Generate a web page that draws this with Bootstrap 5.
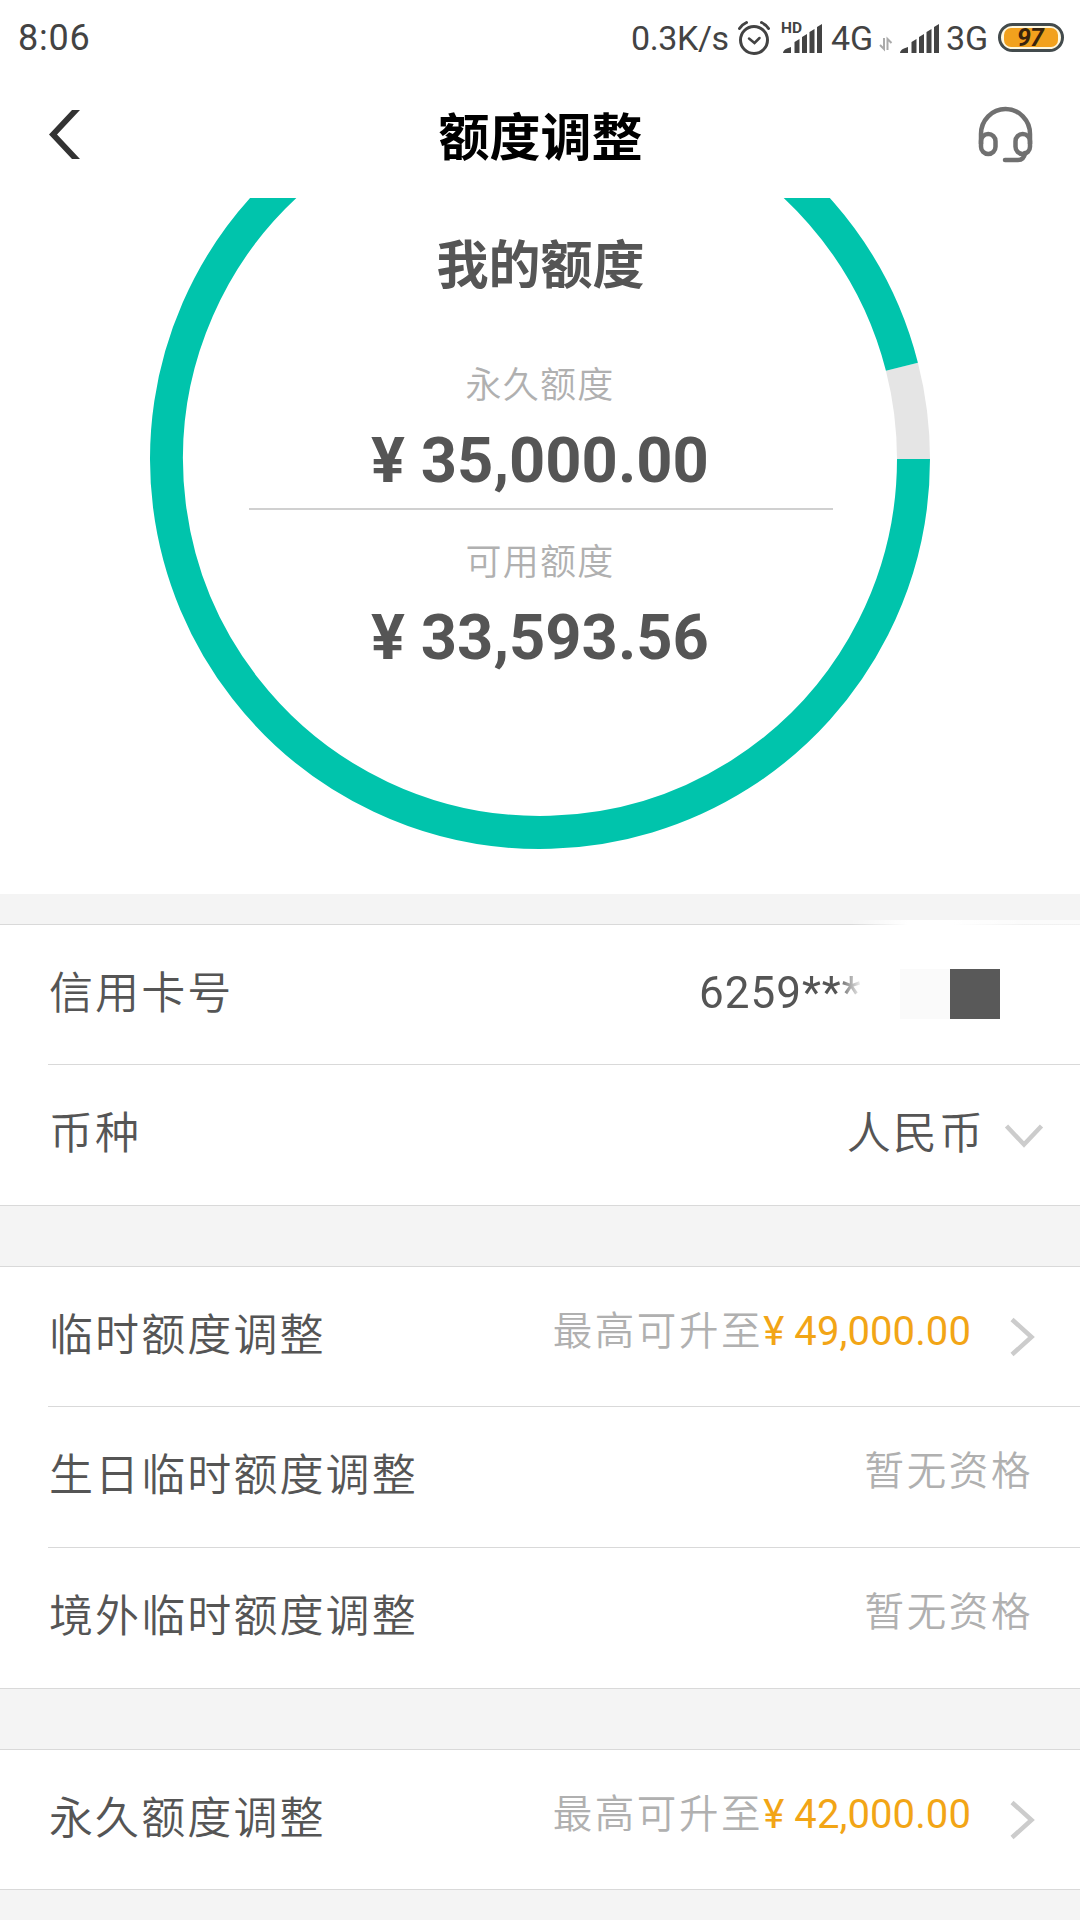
<!DOCTYPE html>
<html lang="zh-CN">
<head>
<meta charset="utf-8">
<meta name="viewport" content="width=device-width, initial-scale=1">
<title>额度调整</title>
<link href="https://cdn.jsdelivr.net/npm/bootstrap@5.3.0/dist/css/bootstrap.min.css" rel="stylesheet">
<style>
body{width:1080px;height:1920px;overflow:hidden;background:#f4f4f4;color:#555;font-family:Roboto,"Noto Sans CJK SC",sans-serif;line-height:1}
svg{display:block;flex:none;overflow:visible}
.status-bar{height:76px;padding:0 15px 0 18px;color:#434343;font-size:34px}
.status-bar .clock{font-size:36px;letter-spacing:.8px}
.status-bar span{white-space:nowrap}
.status-bar .speed{width:106px;letter-spacing:-.4px}
.status-bar .net-a{width:48px}
.status-bar .net-b{width:58px;padding-left:6px}
.arrows{margin-top:12px}
.bars-b{margin-left:7px}
.title-bar{height:122px;padding:0 48px}
.title-bar h1{font-size:51px;font-weight:700;color:#000;line-height:1;padding:2px 0 0 1px}
.ring-box{height:696px}
.ring-art{left:0;top:0}
.ring-info{padding-top:43px}
.ring-info h2{font-size:52px;font-weight:700;line-height:1;height:52px;margin-bottom:75px;padding-left:1px}
.ring-info .cap{font-size:36px;font-weight:350;letter-spacing:1.3px;color:#b0b0b0;height:36px}
.ring-info .sum{font-size:63.3px;font-weight:700;height:64px;margin-top:25px}
.ring-info .rule{width:584px;height:2px;background:#d0d0d0;margin:15px 0 35px 2px}
.line-item{height:141px;padding:0 46px 1px 49px;background:#fff}
.line-item + .line-item::before{content:"";position:absolute;left:48px;right:0;top:0;height:1px;background:#d9d9d9}
.block{border-top:1px solid #d9d9d9;border-bottom:1px solid #d9d9d9;border-radius:0}
.block .line-item:first-child{height:139px}
.gap-s{height:30px}.gap-l{height:60px}
.item-name{font-size:44px;letter-spacing:2.1px;font-weight:350}
.hint{font-size:39.5px;letter-spacing:2.6px;font-weight:350;color:#b0b0b0;padding-bottom:9px}
.line-item .hint:last-child{margin-right:1px}
.gold{font-size:40px;color:#f2a516;letter-spacing:.1px;padding-bottom:9px}
.card-no{font-size:44px;letter-spacing:1px;-webkit-mask-image:linear-gradient(90deg,#000 138px,transparent 164px);mask-image:linear-gradient(90deg,#000 138px,transparent 164px);width:201px;padding-bottom:3px}
.blk{width:50px;height:50px}
.blk-a{background:#fafafa}.blk-b{background:#595959;margin-right:34px}
.chev-down{margin:5px -9px 0 20px}
.chev-right{margin:1px -1px 0 39px}
.wash{left:850px;right:0;top:-5px;height:6px;z-index:3;background:linear-gradient(90deg,rgba(255,255,255,0),#fff 25%,#fff 45%,rgba(255,255,255,.65) 75%)}
</style>
<script src="https://cdn.jsdelivr.net/npm/bootstrap@5.3.0/dist/js/bootstrap.bundle.min.js"></script>
</head>
<body>
<header class="bg-white">
  <div class="status-bar d-flex align-items-center">
    <span class="clock me-auto">8:06</span>
    <span class="speed">0.3K/s</span>
    <svg width="34" height="36" viewBox="0 0 34 36" fill="none" stroke="#434343" stroke-width="3" stroke-linecap="round"><circle cx="17" cy="20" r="13.5"/><path d="M2.500 8.500Q5 4.500 9.500 2.500M31.500 8.500Q29 4.500 24.500 2.500"/><path d="M12 18.500l5.500 4.500 5-5" stroke-width="2.500"/></svg>
    <svg class="ms-2 ps-1" width="48" height="36" viewBox="0 0 44 36"><text x="-2" y="13" font-size="15.500" font-weight="700" fill="#434343">HD</text><path fill="#434343" d="M0 33q0-4 8-6v6zM11.500 22l5-3v14h-5zM19 17l5-3v19h-5zM26.500 12l5-3v24h-5zM34 7l5-3v29h-5z"/></svg>
    <span class="ms-1 net-a">4G</span>
    <svg class="arrows" width="14" height="14" viewBox="0 0 14 14" fill="none" stroke="#aaa" stroke-width="2"><path d="M5 1v11L1 8M8.500 13V2l4 4"/></svg>
    <svg class="bars-b" width="40" height="36" viewBox="0 0 40 36"><path fill="#434343" d="M0 33q0-4 8-6v6zM11.500 22l5-3v14h-5zM19 17l5-3v19h-5zM26.500 12l5-3v24h-5zM34 7l5-3v29h-5z"/></svg>
    <span class="net-b">3G</span>
    <svg width="67" height="30" viewBox="0 0 67 30"><rect x="1.500" y="1.500" width="63" height="26" rx="13" fill="#fff8df" stroke="#434b4d" stroke-width="3"/><rect x="6" y="5" width="54" height="19" rx="7" fill="#f2a11d"/><text x="32" y="23" text-anchor="middle" font-size="25" font-weight="700" font-style="italic" letter-spacing="-1" fill="#38240d">97</text></svg>
  </div>
  <div class="title-bar d-flex align-items-center justify-content-between">
    <svg class="mb-1" width="53" height="50" viewBox="0 0 53 50"><path fill="#333" d="M32 0h-8L1 24.500 24 49h8L9 24.500z"/></svg>
    <h1 class="m-0">额度调整</h1>
    <svg class="mb-1" width="53" height="56" viewBox="0 0 53 56" fill="none" stroke="#707070" stroke-width="4.500"><path d="M2 37V27a24.500 25 0 0 1 49 0v10"/><rect x="2" y="27" width="14.500" height="20" rx="7.200"/><rect x="36.500" y="27" width="14.500" height="20" rx="7.200"/><path d="M46 46q-1 7-7 7H26" stroke-linecap="round"/></svg>
  </div>
</header>
<main>
  <section class="ring-box position-relative bg-white overflow-hidden">
    <svg class="ring-art position-absolute" width="1080" height="696" viewBox="0 198 1080 696" fill="none" stroke-width="33"><path stroke="#e5e5e5" d="M913.500 459A373.500 373.500 0 0 0 901.930 366.740"/><path stroke="#00c4ac" d="M913.500 459A373.500 373.500 0 1 1 901.930 366.740"/></svg>
    <div class="ring-info position-relative d-flex flex-column align-items-center">
      <h2>我的额度</h2>
      <div class="cap">永久额度</div>
      <div class="sum">¥ 35,000.00</div>
      <div class="rule"></div>
      <div class="cap">可用额度</div>
      <div class="sum">¥ 33,593.56</div>
    </div>
  </section>
  <div class="gap-s"></div>
  <section class="block list-group list-group-flush position-relative">
    <div class="line-item position-relative d-flex align-items-center">
      <span class="item-name me-auto">信用卡号</span>
      <span class="card-no">6259***</span>
      <span class="blk blk-a"></span><span class="blk blk-b"></span>
    </div>
    <div class="line-item position-relative d-flex align-items-center">
      <span class="item-name me-auto">币种</span>
      <span class="item-name">人民币</span>
      <svg class="chev-down" width="38" height="26" viewBox="0 0 38 26" fill="none" stroke="#ccc" stroke-width="4.500"><path d="M1.500 2L19 20.500 36.500 2"/></svg>
    </div>
    <div class="wash position-absolute"></div>
  </section>
  <div class="gap-l"></div>
  <section class="block list-group list-group-flush">
    <div class="line-item position-relative d-flex align-items-center">
      <span class="item-name me-auto">临时额度调整</span>
      <span class="hint">最高可升至</span><span class="gold">¥ 49,000.00</span>
      <svg class="chev-right" width="25" height="38" viewBox="0 0 25 38" fill="none" stroke="#ccc" stroke-width="4.500"><path d="M2 1.500L21.500 19 2 36.500"/></svg>
    </div>
    <div class="line-item position-relative d-flex align-items-center">
      <span class="item-name me-auto">生日临时额度调整</span><span class="hint">暂无资格</span>
    </div>
    <div class="line-item position-relative d-flex align-items-center">
      <span class="item-name me-auto">境外临时额度调整</span><span class="hint">暂无资格</span>
    </div>
  </section>
  <div class="gap-l"></div>
  <section class="block list-group list-group-flush">
    <div class="line-item position-relative d-flex align-items-center">
      <span class="item-name me-auto">永久额度调整</span>
      <span class="hint">最高可升至</span><span class="gold">¥ 42,000.00</span>
      <svg class="chev-right" width="25" height="38" viewBox="0 0 25 38" fill="none" stroke="#ccc" stroke-width="4.500"><path d="M2 1.500L21.500 19 2 36.500"/></svg>
    </div>
  </section>
</main>
</body>
</html>
